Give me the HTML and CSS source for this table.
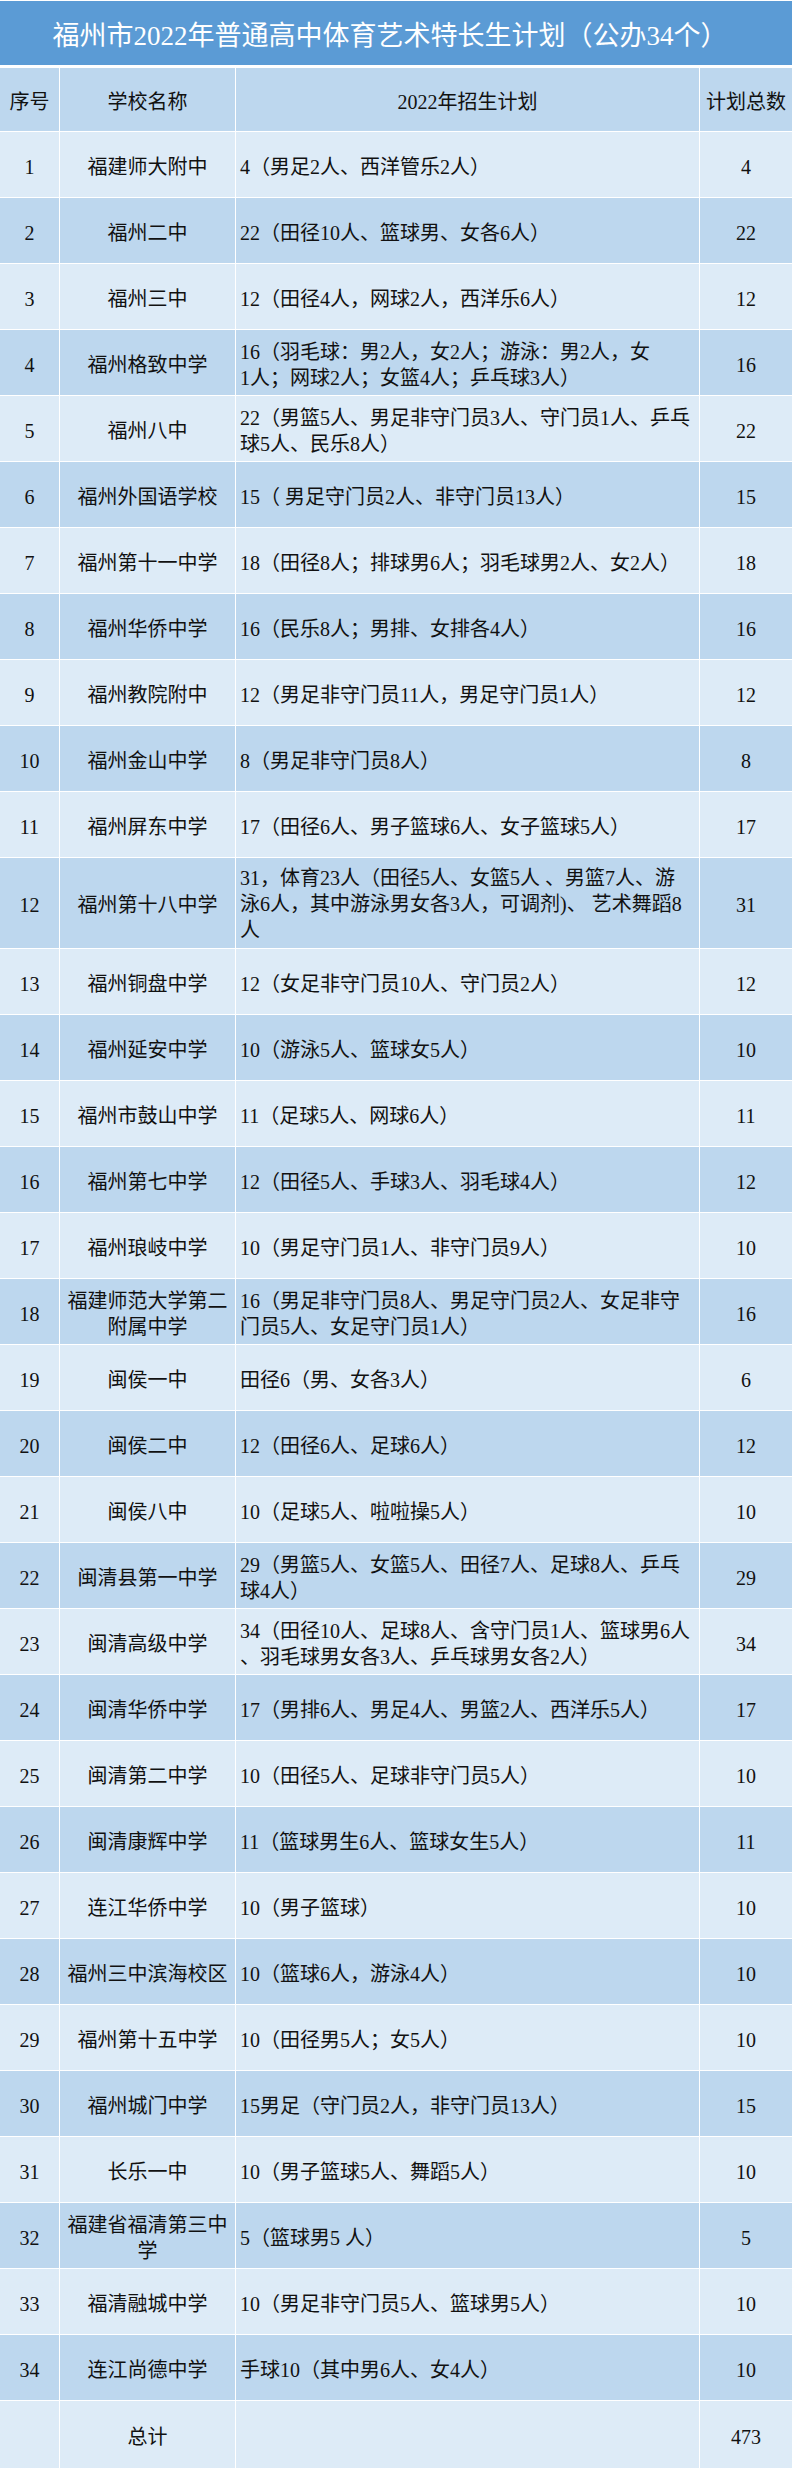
FILE: index.html
```html
<!DOCTYPE html>
<html lang="zh-CN">
<head>
<meta charset="utf-8">
<title>福州市2022年普通高中体育艺术特长生计划</title>
<link rel="stylesheet" href="styles.css">
</head>
<body>
<div class="sheet">
  <div class="title">福州市2022年普通高中体育艺术特长生计划（公办34个）</div>
  <div class="table">
    <div class="row head"><div class="c">序号</div><div class="c">学校名称</div><div class="c">2022年招生计划</div><div class="c">计划总数</div></div>
    <div class="row odd"><div class="c">1</div><div class="c">福建师大附中</div><div class="d">4（男足2人、西洋管乐2人）</div><div class="c">4</div></div>
    <div class="row even"><div class="c">2</div><div class="c">福州二中</div><div class="d">22（田径10人、篮球男、女各6人）</div><div class="c">22</div></div>
    <div class="row odd"><div class="c">3</div><div class="c">福州三中</div><div class="d">12（田径4人，网球2人，西洋乐6人）</div><div class="c">12</div></div>
    <div class="row even"><div class="c">4</div><div class="c">福州格致中学</div><div class="d">16（羽毛球：男2人，女2人；游泳：男2人，女<br>1人；网球2人；女篮4人；乒乓球3人）</div><div class="c">16</div></div>
    <div class="row odd"><div class="c">5</div><div class="c">福州八中</div><div class="d">22（男篮5人、男足非守门员3人、守门员1人、乒乓<br>球5人、民乐8人）</div><div class="c">22</div></div>
    <div class="row even"><div class="c">6</div><div class="c">福州外国语学校</div><div class="d">15（ 男足守门员2人、非守门员13人）</div><div class="c">15</div></div>
    <div class="row odd"><div class="c">7</div><div class="c">福州第十一中学</div><div class="d">18（田径8人；排球男6人；羽毛球男2人、女2人）</div><div class="c">18</div></div>
    <div class="row even"><div class="c">8</div><div class="c">福州华侨中学</div><div class="d">16（民乐8人；男排、女排各4人）</div><div class="c">16</div></div>
    <div class="row odd"><div class="c">9</div><div class="c">福州教院附中</div><div class="d">12（男足非守门员11人，男足守门员1人）</div><div class="c">12</div></div>
    <div class="row even"><div class="c">10</div><div class="c">福州金山中学</div><div class="d">8（男足非守门员8人）</div><div class="c">8</div></div>
    <div class="row odd"><div class="c">11</div><div class="c">福州屏东中学</div><div class="d">17（田径6人、男子篮球6人、女子篮球5人）</div><div class="c">17</div></div>
    <div class="row even tall"><div class="c">12</div><div class="c">福州第十八中学</div><div class="d">31，体育23人（田径5人、女篮5人 、男篮7人、游<br>泳6人，其中游泳男女各3人，可调剂)、 艺术舞蹈8<br>人</div><div class="c">31</div></div>
    <div class="row odd"><div class="c">13</div><div class="c">福州铜盘中学</div><div class="d">12（女足非守门员10人、守门员2人）</div><div class="c">12</div></div>
    <div class="row even"><div class="c">14</div><div class="c">福州延安中学</div><div class="d">10（游泳5人、篮球女5人）</div><div class="c">10</div></div>
    <div class="row odd"><div class="c">15</div><div class="c">福州市鼓山中学</div><div class="d">11（足球5人、网球6人）</div><div class="c">11</div></div>
    <div class="row even"><div class="c">16</div><div class="c">福州第七中学</div><div class="d">12（田径5人、手球3人、羽毛球4人）</div><div class="c">12</div></div>
    <div class="row odd"><div class="c">17</div><div class="c">福州琅岐中学</div><div class="d">10（男足守门员1人、非守门员9人）</div><div class="c">10</div></div>
    <div class="row even"><div class="c">18</div><div class="c">福建师范大学第二<br>附属中学</div><div class="d">16（男足非守门员8人、男足守门员2人、女足非守<br>门员5人、女足守门员1人）</div><div class="c">16</div></div>
    <div class="row odd"><div class="c">19</div><div class="c">闽侯一中</div><div class="d">田径6（男、女各3人）</div><div class="c">6</div></div>
    <div class="row even"><div class="c">20</div><div class="c">闽侯二中</div><div class="d">12（田径6人、足球6人）</div><div class="c">12</div></div>
    <div class="row odd"><div class="c">21</div><div class="c">闽侯八中</div><div class="d">10（足球5人、啦啦操5人）</div><div class="c">10</div></div>
    <div class="row even"><div class="c">22</div><div class="c">闽清县第一中学</div><div class="d">29（男篮5人、女篮5人、田径7人、足球8人、乒乓<br>球4人）</div><div class="c">29</div></div>
    <div class="row odd"><div class="c">23</div><div class="c">闽清高级中学</div><div class="d">34（田径10人、足球8人、含守门员1人、篮球男6人<br>、羽毛球男女各3人、乒乓球男女各2人）</div><div class="c">34</div></div>
    <div class="row even"><div class="c">24</div><div class="c">闽清华侨中学</div><div class="d">17（男排6人、男足4人、男篮2人、西洋乐5人）</div><div class="c">17</div></div>
    <div class="row odd"><div class="c">25</div><div class="c">闽清第二中学</div><div class="d">10（田径5人、足球非守门员5人）</div><div class="c">10</div></div>
    <div class="row even"><div class="c">26</div><div class="c">闽清康辉中学</div><div class="d">11（篮球男生6人、篮球女生5人）</div><div class="c">11</div></div>
    <div class="row odd"><div class="c">27</div><div class="c">连江华侨中学</div><div class="d">10（男子篮球）</div><div class="c">10</div></div>
    <div class="row even"><div class="c">28</div><div class="c">福州三中滨海校区</div><div class="d">10（篮球6人，游泳4人）</div><div class="c">10</div></div>
    <div class="row odd"><div class="c">29</div><div class="c">福州第十五中学</div><div class="d">10（田径男5人；女5人）</div><div class="c">10</div></div>
    <div class="row even"><div class="c">30</div><div class="c">福州城门中学</div><div class="d">15男足（守门员2人，非守门员13人）</div><div class="c">15</div></div>
    <div class="row odd"><div class="c">31</div><div class="c">长乐一中</div><div class="d">10（男子篮球5人、舞蹈5人）</div><div class="c">10</div></div>
    <div class="row even"><div class="c">32</div><div class="c">福建省福清第三中<br>学</div><div class="d">5（篮球男5 人）</div><div class="c">5</div></div>
    <div class="row odd"><div class="c">33</div><div class="c">福清融城中学</div><div class="d">10（男足非守门员5人、篮球男5人）</div><div class="c">10</div></div>
    <div class="row even"><div class="c">34</div><div class="c">连江尚德中学</div><div class="d">手球10（其中男6人、女4人）</div><div class="c">10</div></div>
    <div class="row odd total"><div class="c"></div><div class="c">总计</div><div class="d"></div><div class="c">473</div></div>
  </div>
</div>
</body>
</html>
```

FILE: styles.css
```css
html, body {
  margin: 0;
  padding: 0;
  background: #ffffff;
}

body {
  font-family: "Liberation Serif", "Noto Sans CJK SC", serif;
  color: #111111;
}

.sheet {
  width: 792px;
  padding-top: 1px;
}

.title {
  height: 64px;
  background: #5b9bd5;
  color: #ffffff;
  font-size: 27px;
  display: flex;
  align-items: center;
  justify-content: center;
  white-space: nowrap;
  padding-right: 12px;
  box-sizing: border-box;
}

.table {
  margin-top: 3px;
  display: flex;
  flex-direction: column;
  gap: 1px;
}

.row {
  display: grid;
  grid-template-columns: 59px 175px 463px 92px;
  column-gap: 1px;
  height: 65px;
  font-size: 20px;
  line-height: 26px;
}

.row.head { height: 63px; }
.row.tall { height: 90px; }
.row.total { height: 67px; }

.row.head > div,
.row.even > div { background: #bdd7ee; }
.row.odd > div { background: #ddebf7; }

.c {
  display: flex;
  align-items: center;
  justify-content: center;
  text-align: center;
  white-space: nowrap;
  padding-top: 4px;
  box-sizing: border-box;
}

.d {
  display: flex;
  align-items: center;
  justify-content: flex-start;
  white-space: nowrap;
  padding-left: 4px;
  padding-top: 4px;
  box-sizing: border-box;
}

.row.tall .d { padding-top: 2px; }
```
